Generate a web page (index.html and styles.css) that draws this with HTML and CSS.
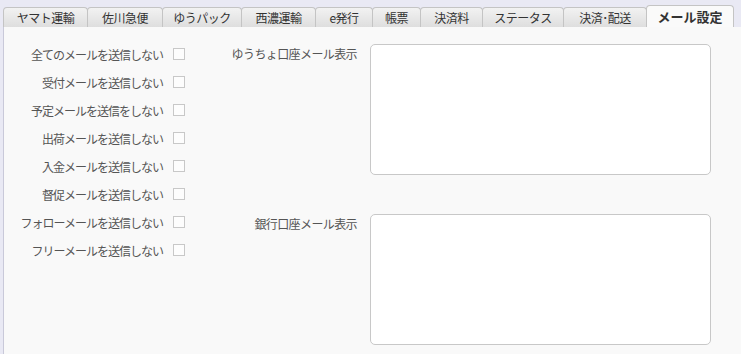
FILE: index.html
```html
<!DOCTYPE html>
<html lang="ja">
<head>
    <meta charset="UTF-8">
    <meta name="viewport" content="width=device-width, initial-scale=1.0">
    <title>メール設定</title>
    <link rel="stylesheet" href="styles.css">
</head>
<body>

    <ul class="tabs">
        <li class="tab tab-yamato">ヤマト運輸</li>
        <li class="tab tab-sagawa">佐川急便</li>
        <li class="tab tab-yupack">ゆうパック</li>
        <li class="tab tab-seino">西濃運輸</li>
        <li class="tab tab-ehakko">e発行</li>
        <li class="tab tab-chohyo">帳票</li>
        <li class="tab tab-fee">決済料</li>
        <li class="tab tab-status">ステータス</li>
        <li class="tab tab-pay">決済･配送</li>
        <li class="tab tab-mail active">メール設定</li>
    </ul>

    <div class="panel">
        <div class="mail-flags">
            <label class="flag-label" for="f1">全てのメールを送信しない</label>
            <input type="checkbox" id="f1" class="flag-check">
            <label class="flag-label" for="f2">受付メールを送信しない</label>
            <input type="checkbox" id="f2" class="flag-check">
            <label class="flag-label" for="f3">予定メールを送信をしない</label>
            <input type="checkbox" id="f3" class="flag-check">
            <label class="flag-label" for="f4">出荷メールを送信しない</label>
            <input type="checkbox" id="f4" class="flag-check">
            <label class="flag-label" for="f5">入金メールを送信しない</label>
            <input type="checkbox" id="f5" class="flag-check">
            <label class="flag-label" for="f6">督促メールを送信しない</label>
            <input type="checkbox" id="f6" class="flag-check">
            <label class="flag-label" for="f7">フォローメールを送信しない</label>
            <input type="checkbox" id="f7" class="flag-check">
            <label class="flag-label" for="f8">フリーメールを送信しない</label>
            <input type="checkbox" id="f8" class="flag-check">
        </div>

        <div class="mail-texts">
            <label class="text-label" for="t1">ゆうちょ口座メール表示</label>
            <textarea id="t1" class="mail-text"></textarea>
            <label class="text-label" for="t2">銀行口座メール表示</label>
            <textarea id="t2" class="mail-text"></textarea>
        </div>
    </div>

</body>
</html>
```

FILE: styles.css
```css
body {
    margin: 0;
    background-color: #e9e9f4;
    font-family: "Noto Sans CJK JP", "DejaVu Sans", sans-serif;
    font-size: 12px;
    height: 354px;
    overflow: hidden;
}
.tabs {
    display: flex;
    align-items: flex-end;
    list-style: none;
    margin: 0;
    padding: 5px 0 0 3px;
    height: 22px;
}
.tab {
    flex: none;
    box-sizing: border-box;
    height: 20px;
    line-height: 19px;
    text-align: center;
    color: #333;
    letter-spacing: -0.5px;
    background: linear-gradient(#f2f2f2, #dedede);
    border: 1px solid #c4c4c4;
    border-bottom: none;
    border-radius: 4px 4px 0 0;
    margin-right: -1px;
    white-space: nowrap;
}
.tab-yamato { width: 85px; }
.tab-sagawa { width: 76px; }
.tab-yupack { width: 80px; }
.tab-seino { width: 75px; }
.tab-ehakko { width: 58px; }
.tab-chohyo { width: 49px; }
.tab-fee { width: 63px; }
.tab-status { width: 82px; }
.tab-pay { width: 84px; }
.tab-mail { width: 88px; }
.tab.active {
    height: 22px;
    line-height: 22px;
    background: #fafafa;
    font-size: 13px;
    font-weight: bold;
    letter-spacing: 0;
    color: #333;
}
.panel {
    display: flex;
    align-items: flex-start;
    background-color: #f9f9f9;
    border-left: 1px solid #c9c9d9;
    margin-left: 3px;
    padding-top: 13px;
    height: 314px;
}
.mail-flags {
    display: grid;
    grid-template-columns: 159px 12px;
    grid-auto-rows: 28px;
    column-gap: 10px;
    align-items: center;
}
.flag-label {
    text-align: right;
    color: #555;
    letter-spacing: -1px;
    white-space: nowrap;
}
.flag-check {
    appearance: none;
    width: 12px;
    height: 12px;
    margin: 0;
    background: #fdfdfd;
    border: 1px solid #c8c8c8;
}
.mail-texts {
    display: grid;
    grid-template-columns: 157px 341px;
    column-gap: 13px;
    row-gap: 39px;
    margin-left: 15px;
    padding-top: 4px;
}
.text-label {
    text-align: right;
    color: #555;
    letter-spacing: -0.6px;
    white-space: nowrap;
    line-height: 18px;
    padding-top: 1px;
}
.mail-text {
    width: 341px;
    height: 131px;
    box-sizing: border-box;
    margin: 0;
    background: #fff;
    border: 1px solid #c8c8c8;
    border-radius: 5px;
    resize: none;
}
```
